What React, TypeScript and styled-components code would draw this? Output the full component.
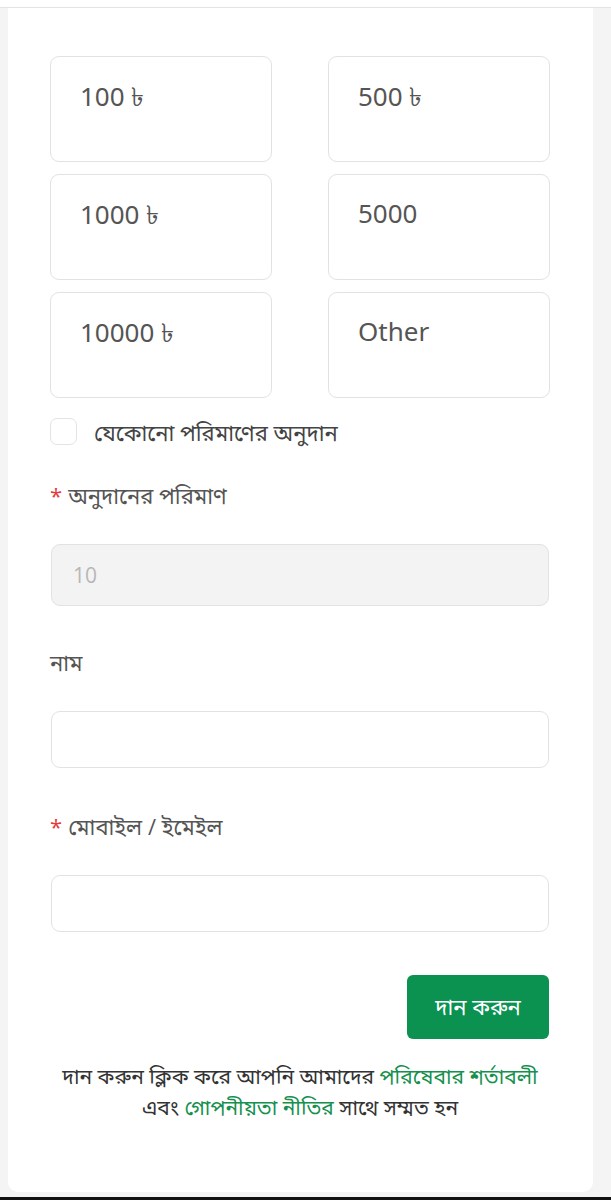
import React from "react";
import styled, { createGlobalStyle } from "styled-components";

const GlobalStyle = createGlobalStyle`
  html, body {
    margin: 0;
    padding: 0;
    background: #f4f4f4;
  }
  body {
    font-family: "Open Sans", "Noto Sans", "Noto Sans Bengali", sans-serif;
  }
`;

const amounts = ["100 ৳", "500 ৳", "1000 ৳", "5000", "10000 ৳", "Other"];

const Page = styled.div`
  height: 1200px;
  display: flex;
  flex-direction: column;
  box-sizing: border-box;
  border-bottom: 3px solid #111;
  overflow: hidden;
`;

const TopStrip = styled.div`
  height: 7px;
  flex-shrink: 0;
  background: #fff;
  border-bottom: 1px solid #e4e4e4;
`;

const Card = styled.div`
  background: #fff;
  margin: 0 18px 5px 8px;
  border-radius: 0 0 10px 10px;
  padding: 48px 43px 0 42px;
  flex: 1;
`;

const AmountGrid = styled.div`
  display: grid;
  grid-template-columns: 222px 222px;
  justify-content: space-between;
  row-gap: 12px;
`;

const AmountCard = styled.button`
  height: 106px;
  box-sizing: border-box;
  background: #fff;
  border: 1px solid #e2e2e2;
  border-radius: 9px;
  padding: 20px 0 0 29px;
  text-align: left;
  display: flex;
  align-items: flex-start;
  font-family: "Noto Sans", "Open Sans", sans-serif;
  font-size: 26px;
  color: #555;
  cursor: pointer;
`;

const CheckRow = styled.label`
  display: flex;
  align-items: center;
  gap: 17px;
  margin-top: 20px;
  font-size: 22px;
  color: #444;
  line-height: 26px;
`;

const CheckBox = styled.span`
  width: 27px;
  height: 27px;
  box-sizing: border-box;
  border: 1px solid #e3e3e3;
  border-radius: 7px;
  background: #fff;
`;

const Field = styled.div<{ gapTop: number }>`
  margin-top: ${({ gapTop }) => gapTop}px;
`;

const Label = styled.div`
  font-size: 22px;
  line-height: 30px;
  color: #555;
  margin-bottom: 34px;
`;

const Star = styled.span`
  color: #e5383b;
  margin-right: 6px;
`;

const Input = styled.input<{ tall?: boolean }>`
  display: block;
  width: calc(100% - 2px);
  box-sizing: border-box;
  height: ${({ tall }) => (tall ? 62 : 57)}px;
  margin: 0 1px;
  border: 1px solid #e2e2e2;
  border-radius: 9px;
  padding: 0 21px;
  font-family: "Open Sans", "Noto Sans", sans-serif;
  font-size: 21px;
  color: #444;
  background: #fff;
  outline: none;
  &:disabled {
    background: #f3f3f3;
    color: #b7b7b7;
  }
`;

const ButtonRow = styled.div`
  display: flex;
  justify-content: flex-end;
  margin-top: 43px;
  padding-right: 1px;
`;

const DonateButton = styled.button`
  width: 142px;
  height: 64px;
  background: #0b9150;
  color: #fff;
  border: none;
  border-radius: 6px;
  font-family: inherit;
  font-size: 22px;
  font-weight: 400;
  cursor: pointer;
`;

const Terms = styled.p`
  margin: 22px 0 0;
  text-align: center;
  font-size: 21px;
  line-height: 31px;
  color: #333;
`;

const TermsLink = styled.a`
  color: #15904e;
  text-decoration: none;
`;

export default function App() {
  return (
    <>
      <GlobalStyle />
      <Page>
        <TopStrip />
        <Card>
          <AmountGrid>
            {amounts.map((a) => (
              <AmountCard key={a}>{a}</AmountCard>
            ))}
          </AmountGrid>

          <CheckRow>
            <CheckBox />
            যেকোনো পরিমাণের অনুদান
          </CheckRow>

          <Field gapTop={35}>
            <Label>
              <Star>*</Star>অনুদানের পরিমাণ
            </Label>
            <Input tall disabled value="10" readOnly />
          </Field>

          <Field gapTop={41}>
            <Label>নাম</Label>
            <Input />
          </Field>

          <Field gapTop={43}>
            <Label>
              <Star>*</Star>মোবাইল / ইমেইল
            </Label>
            <Input />
          </Field>

          <ButtonRow>
            <DonateButton>দান করুন</DonateButton>
          </ButtonRow>

          <Terms>
            দান করুন ক্লিক করে আপনি আমাদের{" "}
            <TermsLink href="#">পরিষেবার শর্তাবলী</TermsLink>
            <br />
            এবং <TermsLink href="#">গোপনীয়তা নীতির</TermsLink> সাথে সম্মত হন
          </Terms>
        </Card>
      </Page>
    </>
  );
}
